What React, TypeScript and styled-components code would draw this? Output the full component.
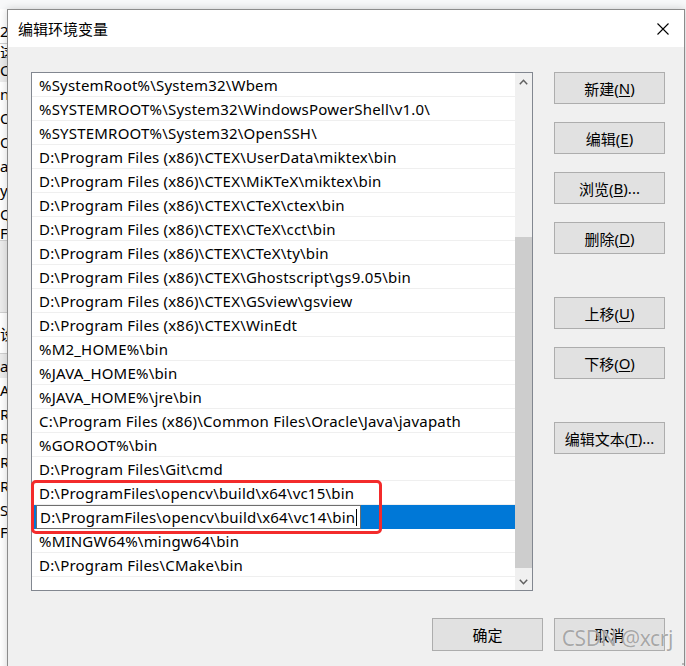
import React from 'react';
import styled, { createGlobalStyle } from 'styled-components';

const GlobalStyle = createGlobalStyle`
  html, body {
    margin: 0;
    padding: 0;
  }
  body {
    width: 686px;
    height: 666px;
    overflow: hidden;
    background: #f7f8f9;
    font-family: "Noto Sans", "Noto Sans CJK SC", sans-serif;
  }
`;

const paths = [
  '%SystemRoot%\\System32\\Wbem',
  '%SYSTEMROOT%\\System32\\WindowsPowerShell\\v1.0\\',
  '%SYSTEMROOT%\\System32\\OpenSSH\\',
  'D:\\Program Files (x86)\\CTEX\\UserData\\miktex\\bin',
  'D:\\Program Files (x86)\\CTEX\\MiKTeX\\miktex\\bin',
  'D:\\Program Files (x86)\\CTEX\\CTeX\\ctex\\bin',
  'D:\\Program Files (x86)\\CTEX\\CTeX\\cct\\bin',
  'D:\\Program Files (x86)\\CTEX\\CTeX\\ty\\bin',
  'D:\\Program Files (x86)\\CTEX\\Ghostscript\\gs9.05\\bin',
  'D:\\Program Files (x86)\\CTEX\\GSview\\gsview',
  'D:\\Program Files (x86)\\CTEX\\WinEdt',
  '%M2_HOME%\\bin',
  '%JAVA_HOME%\\bin',
  '%JAVA_HOME%\\jre\\bin',
  'C:\\Program Files (x86)\\Common Files\\Oracle\\Java\\javapath',
  '%GOROOT%\\bin',
  'D:\\Program Files\\Git\\cmd',
  'D:\\ProgramFiles\\opencv\\build\\x64\\vc15\\bin',
  'D:\\ProgramFiles\\opencv\\build\\x64\\vc14\\bin',
  '%MINGW64%\\mingw64\\bin',
  'D:\\Program Files\\CMake\\bin'
];

const EDITING = 18;

// fragments of the window behind the dialog, seen in the 7px strip on the left
const backdropRows: { h: number; text?: string; shade?: boolean; line?: boolean }[] = [
  { h: 10 },
  { h: 24, text: '27' },
  { h: 1, line: true },
  { h: 14, text: '这' },
  { h: 24, text: 'C', shade: true },
  { h: 24, text: 'nt' },
  { h: 24, text: 'Or' },
  { h: 24, text: 'Or' },
  { h: 24, text: 'a' },
  { h: 24, text: 'y' },
  { h: 24, text: 'Qt' },
  { h: 14, text: 'F' },
  { h: 1, line: true },
  { h: 71, shade: true },
  { h: 1, line: true },
  { h: 40, text: '设' },
  { h: 1, line: true },
  { h: 24, text: 'a', shade: true },
  { h: 24, text: 'A' },
  { h: 24, text: 'R' },
  { h: 24, text: 'R' },
  { h: 24, text: 'R' },
  { h: 24, text: 'R' },
  { h: 24, text: 'S' },
  { h: 20, text: 'F' }
];

const Desktop = styled.div`
  position: relative;
  width: 686px;
  height: 666px;
  overflow: hidden;
`;

const Backdrop = styled.div`
  position: absolute;
  left: 0;
  top: 9px;
  width: 7px;
  height: 657px;
  background: #fff;
  display: flex;
  flex-direction: column;
  overflow: hidden;
`;

const BackdropRow = styled.div<{ $h: number; $shade?: boolean; $line?: boolean }>`
  flex: none;
  height: ${(p) => p.$h}px;
  background: ${(p) => (p.$line ? '#d0d0d0' : p.$shade ? '#ececec' : 'transparent')};
  display: flex;
  align-items: center;
  font-size: 15px;
  color: #000;
  white-space: nowrap;
`;

const Dialog = styled.div`
  position: absolute;
  left: 7px;
  top: 9px;
  width: 678px;
  height: 680px;
  box-sizing: border-box;
  border: 1px solid #8c8c8c;
  background: #f0f0f0;
  box-shadow: 0 0 8px rgba(0, 0, 0, 0.18);
  display: flex;
  flex-direction: column;
`;

const TitleBar = styled.div`
  height: 37px;
  flex: none;
  background: #fff;
  display: flex;
  align-items: center;
  justify-content: space-between;
  padding-left: 10px;
`;

const Title = styled.span`
  font-family: "Noto Sans CJK SC", sans-serif;
  font-size: 15px;
  color: #000;
  margin-top: -1px;
`;

const CloseButton = styled.div`
  width: 42px;
  height: 37px;
  display: flex;
  align-items: center;
  justify-content: center;
`;

const Body = styled.div`
  flex: 1;
  display: flex;
  flex-direction: column;
  padding: 25px 19px 0 23px;
`;

const Main = styled.div`
  display: flex;
  gap: 21px;
`;

const ListBox = styled.div`
  position: relative;
  width: 502px;
  height: 519px;
  box-sizing: border-box;
  border: 1px solid #828790;
  background: #fff;
  display: grid;
  grid-template-columns: 1fr 17px;
`;

const Rows = styled.div`
  display: flex;
  flex-direction: column;
  overflow: hidden;
`;

const Row = styled.div<{ $selected?: boolean }>`
  flex: none;
  height: 24px;
  box-sizing: border-box;
  border-bottom: 1px solid ${(p) => (p.$selected ? '#0078d7' : '#efefef')};
  background: ${(p) => (p.$selected ? '#0078d7' : '#fff')};
  display: flex;
  align-items: center;
  padding-left: ${(p) => (p.$selected ? 4 : 7)}px;
  white-space: nowrap;
  font-size: 15px;
  letter-spacing: 0.2px;
  color: #000;
`;

const EditBox = styled.div`
  height: 24px;
  box-sizing: border-box;
  margin-top: 1px;
  border: 1px solid #6e6e6e;
  background: #fff;
  display: inline-flex;
  align-items: center;
  padding: 0 3px 0 3px;
`;

const Caret = styled.span`
  width: 1px;
  height: 17px;
  background: #000;
  margin-left: 1px;
`;

const ScrollBar = styled.div`
  background: #f0f0f0;
  display: flex;
  flex-direction: column;
`;

const ScrollArrow = styled.div`
  height: 17px;
  flex: none;
  display: flex;
  align-items: center;
  justify-content: center;
`;

const Track = styled.div`
  flex: 1;
  display: flex;
  flex-direction: column;
`;

const Thumb = styled.div`
  margin-top: 147px;
  height: 331px;
  background: #cdcdcd;
`;

const Highlight = styled.div`
  position: absolute;
  left: -1px;
  top: 407px;
  width: 351px;
  height: 54px;
  box-sizing: border-box;
  border: 3px solid #f32b2b;
  border-radius: 5px;
  pointer-events: none;
`;

const ButtonColumn = styled.div`
  display: flex;
  flex-direction: column;
`;

const ButtonGroup = styled.div<{ $gapBefore?: number }>`
  display: flex;
  flex-direction: column;
  gap: 18px;
  margin-top: ${(p) => p.$gapBefore ?? 0}px;
`;

const Button = styled.div`
  width: 111px;
  height: 32px;
  box-sizing: border-box;
  border: 1px solid #adadad;
  background: #e1e1e1;
  display: flex;
  align-items: center;
  justify-content: center;
  font-family: "Noto Sans", "Noto Sans CJK SC", sans-serif;
  font-size: 15px;
  color: #000;
  white-space: nowrap;
`;

const Accel = styled.span`
  text-decoration: underline;
  text-underline-offset: 2px;
`;

const Footer = styled.div`
  display: flex;
  justify-content: flex-end;
  gap: 11px;
  margin-top: 27px;
`;

const FooterButton = styled(Button)`
  height: 33px;
`;

const Watermark = styled.div`
  position: absolute;
  right: 13px;
  top: 628px;
  font-family: "Noto Sans", sans-serif;
  font-size: 21px;
  line-height: 1;
  letter-spacing: -0.4px;
  color: rgba(140, 140, 140, 0.75);
  text-shadow: 0 0 1px rgba(255, 255, 255, 0.9);
  pointer-events: none;
`;

const Grip = styled.div`
  position: absolute;
  right: 2px;
  bottom: 2px;
  width: 10px;
  height: 10px;
`;

const CloseIcon = () => (
  <svg width="12" height="12" viewBox="0 0 12 12">
    <path d="M0.5 0.5 L11.5 11.5 M11.5 0.5 L0.5 11.5" stroke="#000" strokeWidth="1.1" fill="none" />
  </svg>
);

const Chevron = ({ up }: { up?: boolean }) => (
  <svg width="9" height="6" viewBox="0 0 9 6">
    <path
      d={up ? 'M0.8 5.2 L4.5 1.3 L8.2 5.2' : 'M0.8 0.8 L4.5 4.7 L8.2 0.8'}
      stroke="#606060"
      strokeWidth="1.5"
      fill="none"
    />
  </svg>
);

const GripIcon = () => (
  <svg width="10" height="10" viewBox="0 0 10 10">
    {[[8, 2], [5, 5], [8, 5], [2, 8], [5, 8], [8, 8]].map(([x, y]) => (
      <rect key={`${x}-${y}`} x={x} y={y} width="2" height="2" fill="#b8b8b8" />
    ))}
  </svg>
);

export default function App() {
  return (
    <Desktop>
      <GlobalStyle />
      <Backdrop>
        {backdropRows.map((r, i) => (
          <BackdropRow key={i} $h={r.h} $shade={r.shade} $line={r.line}>
            {r.text}
          </BackdropRow>
        ))}
      </Backdrop>

      <Dialog>
        <TitleBar>
          <Title>编辑环境变量</Title>
          <CloseButton>
            <CloseIcon />
          </CloseButton>
        </TitleBar>

        <Body>
          <Main>
            <ListBox>
              <Rows>
                {paths.map((p, i) =>
                  i === EDITING ? (
                    <Row key={i} $selected>
                      <EditBox>
                        {p}
                        <Caret />
                      </EditBox>
                    </Row>
                  ) : (
                    <Row key={i}>{p}</Row>
                  )
                )}
              </Rows>
              <ScrollBar>
                <ScrollArrow>
                  <Chevron up />
                </ScrollArrow>
                <Track>
                  <Thumb />
                </Track>
                <ScrollArrow>
                  <Chevron />
                </ScrollArrow>
              </ScrollBar>
              <Highlight />
            </ListBox>

            <ButtonColumn>
              <ButtonGroup>
                <Button>新建(<Accel>N</Accel>)</Button>
                <Button>编辑(<Accel>E</Accel>)</Button>
                <Button>浏览(<Accel>B</Accel>)...</Button>
                <Button>删除(<Accel>D</Accel>)</Button>
              </ButtonGroup>
              <ButtonGroup $gapBefore={43}>
                <Button>上移(<Accel>U</Accel>)</Button>
                <Button>下移(<Accel>O</Accel>)</Button>
              </ButtonGroup>
              <ButtonGroup $gapBefore={43}>
                <Button>编辑文本(<Accel>T</Accel>)...</Button>
              </ButtonGroup>
            </ButtonColumn>
          </Main>

          <Footer>
            <FooterButton>确定</FooterButton>
            <FooterButton>取消</FooterButton>
          </Footer>
        </Body>
      </Dialog>

      <Watermark>CSDN @xcrj</Watermark>
      <Grip>
        <GripIcon />
      </Grip>
    </Desktop>
  );
}
